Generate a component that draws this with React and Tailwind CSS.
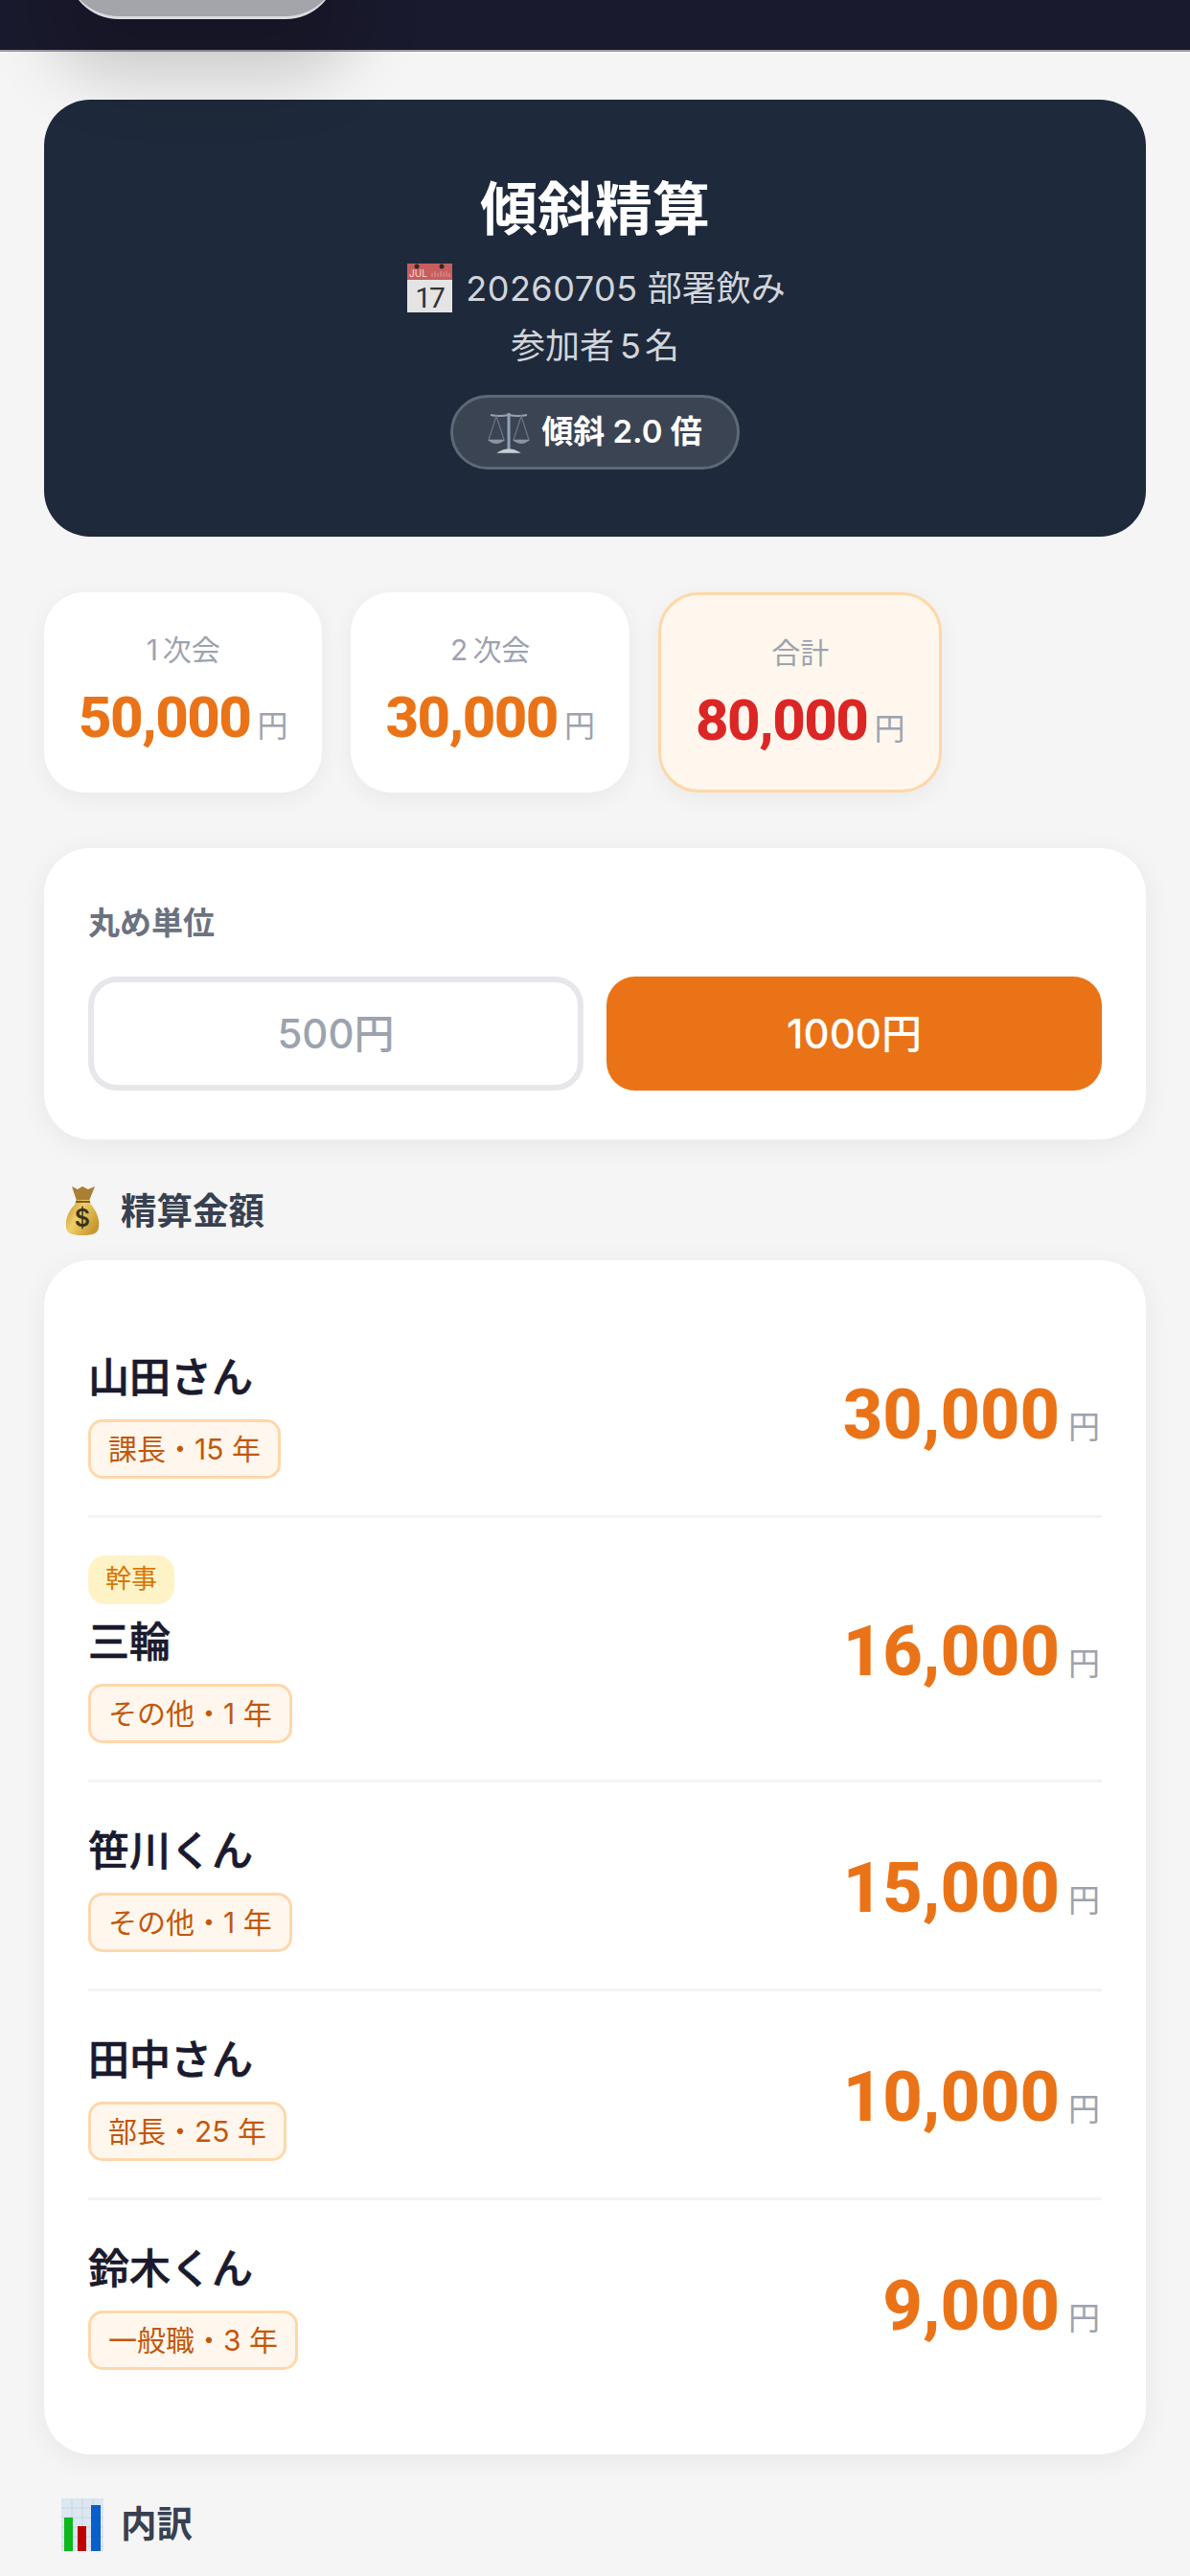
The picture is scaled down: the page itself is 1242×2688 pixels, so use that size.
const font = "font-['Inter','Noto_Sans_CJK_JP',sans-serif]"
const numFont = "font-['Roboto','Noto_Sans_CJK_JP',sans-serif]"

const members = [
  { name: "山田さん", role: "課長・15 年", amount: "30,000" },
  { name: "三輪", role: "その他・1 年", amount: "16,000", organizer: true },
  { name: "笹川くん", role: "その他・1 年", amount: "15,000" },
  { name: "田中さん", role: "部長・25 年", amount: "10,000" },
  { name: "鈴木くん", role: "一般職・3 年", amount: "9,000" },
]

const CalendarEmoji = () => (
  <svg width="47" height="51" viewBox="0 0 47 51" className="shrink-0 overflow-visible">
    <rect x="0" y="0" width="47" height="51" fill="#e4e4e4" />
    <rect x="0" y="0" width="47" height="17" fill="#c65e5e" />
    <circle cx="10" cy="3" r="2.5" fill="#2b2b2b" />
    <circle cx="36" cy="3" r="2.5" fill="#2b2b2b" />
    <text x="2" y="14" fontSize="10" fill="#f3dcdc" fontFamily="Inter">JUL</text>
    <path d="M26 14V10M29 14V8M32 14V10M35 14V8M38 14V9M41 14V8M44 14V10" stroke="#df9a9a" strokeWidth="1" />
    <text x="23" y="46" fontSize="30" letterSpacing="-2" textAnchor="middle" fill="#333" fontFamily="Roboto">17</text>
  </svg>
)

const ScalesEmoji = () => (
  <svg width="44" height="46" viewBox="0 0 44 46" fill="none" className="shrink-0">
    <path d="M22 3V41" stroke="#8fa3b8" strokeWidth="3" />
    <path d="M3 5Q12 7 22 5Q32 7 41 5" stroke="#9aa3ad" strokeWidth="2" />
    <path d="M9 6L1 31H17ZM35 6L27 31H43Z" stroke="#6c7681" strokeWidth="1.2" />
    <path d="M0 31Q9 39 18 31ZM26 31Q35 39 44 31Z" fill="#8b95a0" />
    <path d="M12 44Q22 38 32 44Z" fill="#c9ced3" stroke="#c9ced3" strokeWidth="1.5" />
  </svg>
)

const MoneyBagEmoji = () => (
  <svg width="36" height="52" viewBox="0 0 36 52" className="shrink-0 overflow-visible">
    <defs>
      <linearGradient id="bag" x1="0" y1="0" x2="1" y2="0.6">
        <stop offset="0" stopColor="#b98a2c" />
        <stop offset="0.45" stopColor="#f0cf6a" />
        <stop offset="1" stopColor="#c8962f" />
      </linearGradient>
    </defs>
    <path d="M7 0L13 3L18 0L24 3L31 0L25 15H12Z" fill="#a97f33" />
    <path d="M12 14H25L27 19C33 26 36 34 35 42C35 49 29 51 18 51C7 51 1 49 1 42C0 33 4 25 10 19Z" fill="url(#bag)" />
    <path d="M11 16H26" stroke="#7d5a1c" strokeWidth="2" />
    <text x="18" y="42" fontSize="25" fontWeight="600" textAnchor="middle" fill="#3b3320" fontFamily="Inter">$</text>
  </svg>
)

const ChartEmoji = () => (
  <svg width="44" height="55" viewBox="0 0 44 55" className="shrink-0">
    <rect width="44" height="55" fill="#dce7f1" />
    <path d="M0 10H44M0 20H44M0 30H44M0 40H44M0 50H44M11 0V55M22 0V55M33 0V55" stroke="#c8d6e4" strokeWidth="1" />
    <rect x="3" y="20" width="9" height="35" fill="#0cb81c" />
    <rect x="17" y="29" width="9" height="26" fill="#bd0000" />
    <rect x="31" y="7" width="10" height="48" fill="#0a5fc8" />
  </svg>
)

const StatCard = ({ digit, label, amount, total }) => (
  <div
    className={
      total
        ? "rounded-[42px] border-[3px] border-[#fed7aa] bg-[#fff7ed] px-[36px] pt-[37px] pb-[26px] text-center shadow-[0_6px_24px_rgba(0,0,0,0.05)]"
        : "rounded-[42px] bg-white px-[36px] pt-[37px] pb-[26px] text-center shadow-[0_6px_24px_rgba(0,0,0,0.05)]"
    }
  >
    <div className="h-[46px] text-[30px] leading-[46px] text-[#9ca3af]">
      {digit}
      <span className={digit ? "ml-[5px]" : ""}>{label}</span>
    </div>
    <div className="mt-[2px] flex h-[92px] items-baseline justify-center leading-[92px]">
      <span className={total ? `${numFont} text-[60px] font-extrabold tracking-[-1.5px] text-[#dc2626]` : `${numFont} text-[60px] font-extrabold tracking-[-1.5px] text-[#ea7317]`}>{amount}</span>
      <span className="ml-[7px] text-[32px] text-[#9ca3af]">円</span>
    </div>
  </div>
)

const SectionTitle = ({ icon, children, className }) => (
  <div className={`flex h-[66px] items-center gap-[18px] pl-[18px] ${className}`}>
    <div className="flex w-[44px] justify-center">{icon}</div>
    <span className="text-[37.5px] font-semibold text-[#374151]">{children}</span>
  </div>
)

const MemberRow = ({ member, last }) => (
  <div className={last ? "flex items-center justify-between pt-[35px] pb-[38px]" : "flex items-center justify-between border-b-[3px] border-[#f3f4f6] pt-[35px] pb-[38px]"}>
    <div>
      {member.organizer && (
        <div className="mt-[4px] mb-[3px] flex h-[51px] w-[90px] items-center justify-center rounded-[18px] bg-[#fef3c7] text-[27px] text-[#d97706]">
          幹事
        </div>
      )}
      <div className="h-[72px] text-[43px] font-medium leading-[72px] text-[#1a1a2e] [-webkit-text-stroke:0.7px_#1a1a2e]">{member.name}</div>
      <div className="mt-[8px] inline-flex h-[62px] items-center rounded-[15px] border-[3px] border-[#fed7aa] bg-[#fff7ed] px-[18px] text-[30px] text-[#c2570c]">
        {member.role}
      </div>
    </div>
    <div className="mt-[10px] flex items-baseline">
      <span className={`${numFont} text-[72px] font-extrabold tracking-[0px] text-[#ea7317]`}>{member.amount}</span>
      <span className="ml-[9px] mr-[2px] text-[33px] text-[#9ca3af]">円</span>
    </div>
  </div>
)

export default function App() {
  return (
    <div className={`${font} h-[2688px] overflow-hidden bg-[#f5f5f5]`}>
      {/* top bar with the sheet peeking out */}
      <div className="relative h-[54px] border-b-[2px] border-[#9a9aa0] bg-[#1a1a2e]">
        <div className="absolute left-[70px] top-[-60px] h-[80px] w-[282px] rounded-b-[54px] border-b-[3px] border-[#dcdce0] bg-[#a4a5aa] shadow-[0_40px_70px_20px_rgba(0,0,0,0.18)]" />
      </div>

      <div className="mx-[46px] mt-[50px]">
        <div className="flex flex-col items-center rounded-[48px] bg-[#1e293b] pt-[62px] pb-[70px] text-center">
          <div className="h-[104px] text-[60px] font-bold leading-[104px] text-white">傾斜精算</div>
          <div className="flex h-[61px] items-center gap-[14px] pl-[3px] text-[36px] text-[#d1d5db]">
            <CalendarEmoji />
            <span>
              <span className="tracking-[0.5px]">20260705</span> 部署飲み
            </span>
          </div>
          <div className="h-[61px] text-[36px] leading-[61px] text-[#d1d5db]">
            参加者<span className="ml-[6px]">5</span><span className="ml-[4px]">名</span>
          </div>
          <div className="mt-[20px] flex h-[78px] items-center gap-[12px] rounded-full border-[3px] border-[#5f6875] bg-[#3a4453] px-[36px] text-[33px] font-semibold text-white">
            <ScalesEmoji />
            <span>傾斜 2.0 倍</span>
          </div>
        </div>

        <div className="mt-[58px] flex gap-[30px]">
          <StatCard digit="1" label="次会" amount="50,000" />
          <StatCard digit="2" label="次会" amount="30,000" />
          <StatCard label="合計" amount="80,000" total />
        </div>

        <div className="mt-[58px] rounded-[48px] bg-white px-[46px] pt-[50px] pb-[51px] shadow-[0_6px_30px_rgba(0,0,0,0.06)]">
          <div className="h-[56px] text-[33px] font-semibold leading-[56px] text-[#6b7280]">丸め単位</div>
          <div className="mt-[28px] grid grid-cols-2 gap-[24px]">
            <button className="h-[119px] rounded-[30px] border-[6px] border-[#e5e7eb] bg-white text-[42px] font-medium text-[#9ca3af]">500円</button>
            <button className="h-[119px] rounded-[30px] bg-[#ea7317] text-[42px] font-medium text-white">1000円</button>
          </div>
        </div>

        <SectionTitle icon={<MoneyBagEmoji />} className="mt-[42px]">精算金額</SectionTitle>

        <div className="mt-[18px] rounded-[48px] bg-white px-[46px] pt-[51px] pb-[50px] shadow-[0_6px_30px_rgba(0,0,0,0.06)]">
          {members.map((m, i) => (
            <MemberRow key={m.name} member={m} last={i === members.length - 1} />
          ))}
        </div>

        <SectionTitle icon={<ChartEmoji />} className="mt-[40px]">内訳</SectionTitle>
      </div>
    </div>
  )
}
